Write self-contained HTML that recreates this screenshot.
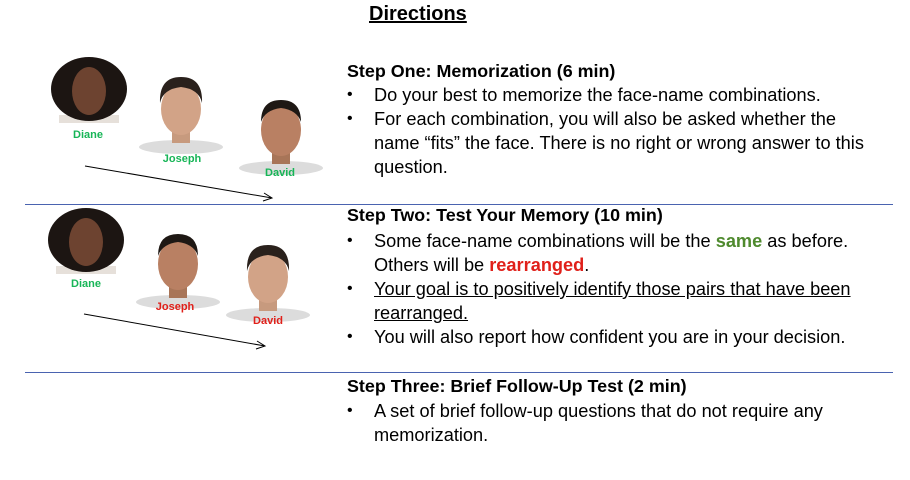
<!DOCTYPE html>
<html><head><meta charset="utf-8"><style>
body{margin:0;width:910px;height:480px;background:#fff;position:relative;overflow:hidden;font-family:"Liberation Sans",sans-serif;color:#000}
.t{position:absolute;white-space:nowrap;font-size:18.2px;line-height:24px}
.b{font-weight:bold;font-size:17.9px}
.bul{position:absolute;font-size:16px;line-height:24px}
.hr{position:absolute;left:25px;width:868px;height:1px;background:#4a63b0}
.lbl{position:absolute;font-size:11px;font-weight:bold;transform:translateX(-50%)}
.g{color:#17b557}.r{color:#e0201a}
</style></head><body>
<div class="t b" style="left:369px;top:2px;font-size:20px;text-decoration:underline">Directions</div>

<svg width="910" height="480" style="position:absolute;left:0;top:0">
<defs>
<g id="w"><ellipse cx="0" cy="52" rx="42" ry="7" fill="#dcdcdc"/><rect x="-9" y="28" width="18" height="20" fill="#c79a7e"/><ellipse cx="0" cy="14" rx="20" ry="26" fill="#d2a387"/><path d="M-21,8 Q-22,-18 0,-18 Q22,-18 21,8 Q18,-6 0,-8 Q-18,-6 -21,8Z" fill="#2a211c"/></g>
<g id="m"><ellipse cx="0" cy="52" rx="42" ry="7" fill="#dcdcdc"/><rect x="-9" y="28" width="18" height="20" fill="#a87558"/><ellipse cx="0" cy="14" rx="20" ry="26" fill="#b98063"/><path d="M-20,6 Q-20,-16 0,-16 Q20,-16 20,6 Q16,-6 0,-8 Q-16,-6 -20,6Z" fill="#1e1814"/></g>
<g id="d"><rect x="-30" y="26" width="60" height="8" fill="#e6e0da"/><ellipse cx="0" cy="0" rx="38" ry="32" fill="#1c1512"/><ellipse cx="0" cy="2" rx="17" ry="24" fill="#6d4330"/></g>
</defs>
<use href="#d" x="89" y="89"/>
<use href="#w" x="181" y="95"/>
<use href="#m" x="281" y="116"/>
<use href="#d" x="86" y="240"/>
<use href="#m" x="178" y="250"/>
<use href="#w" x="268" y="263"/>
<g stroke="#000" stroke-width="1" fill="none">
<line x1="85" y1="166" x2="272" y2="198"/><path d="M264,193 L272,198 L263,201"/>
<line x1="84" y1="314" x2="265" y2="346"/><path d="M257,341 L265,346 L256,349"/>
</g>
</svg>
<div class="lbl g" style="left:88px;top:129px">Diane</div>
<div class="lbl g" style="left:182px;top:153px">Joseph</div>
<div class="lbl g" style="left:280px;top:167px">David</div>
<div class="lbl g" style="left:86px;top:278px">Diane</div>
<div class="lbl r" style="left:175px;top:301px">Joseph</div>
<div class="lbl r" style="left:268px;top:315px">David</div>

<div class="hr" style="top:204px"></div>
<div class="hr" style="top:372px"></div>

<div class="t b" style="left:347px;top:59px">Step One: Memorization (6 min)</div>
<div class="bul" style="left:347px;top:83px">•</div>
<div class="t" style="left:374px;top:83px">Do your best to memorize the face-name combinations.</div>
<div class="bul" style="left:347px;top:107px">•</div>
<div class="t" style="left:374px;top:107px">For each combination, you will also be asked whether the</div>
<div class="t" style="left:374px;top:131px">name “fits” the face. There is no right or wrong answer to this</div>
<div class="t" style="left:374px;top:155px">question.</div>

<div class="t b" style="left:347px;top:203px">Step Two: Test Your Memory (10 min)</div>
<div class="bul" style="left:347px;top:229px">•</div>
<div class="t" style="left:374px;top:229px">Some face-name combinations will be the <b style="color:#4f8a2e">same</b> as before.</div>
<div class="t" style="left:374px;top:253px">Others will be <b style="color:#e0201a">rearranged</b>.</div>
<div class="bul" style="left:347px;top:277px">•</div>
<div class="t" style="left:374px;top:277px;text-decoration:underline">Your goal is to positively identify those pairs that have been</div>
<div class="t" style="left:374px;top:301px;text-decoration:underline">rearranged.</div>
<div class="bul" style="left:347px;top:325px">•</div>
<div class="t" style="left:374px;top:325px">You will also report how confident you are in your decision.</div>

<div class="t b" style="left:347px;top:374px">Step Three: Brief Follow-Up Test (2 min)</div>
<div class="bul" style="left:347px;top:399px">•</div>
<div class="t" style="left:374px;top:399px">A set of brief follow-up questions that do not require any</div>
<div class="t" style="left:374px;top:423px">memorization.</div>
</body></html>
